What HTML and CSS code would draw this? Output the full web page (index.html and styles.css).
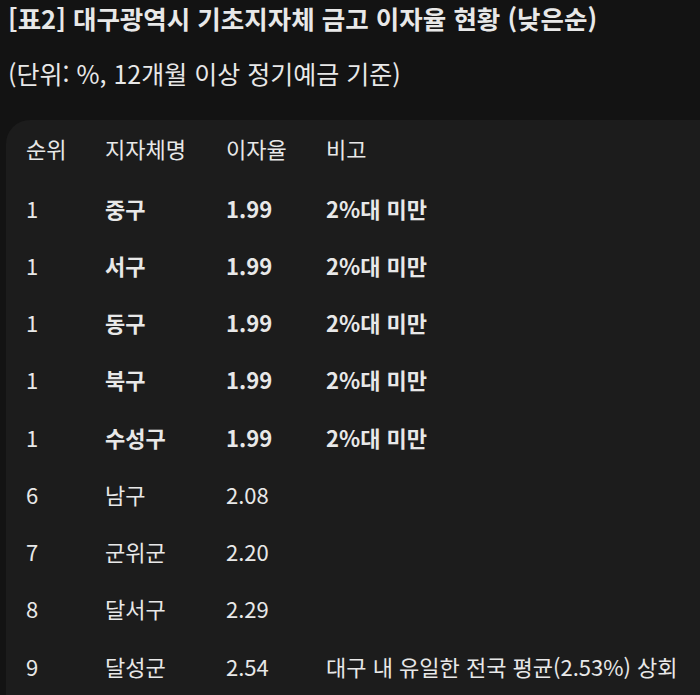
FILE: index.html
```html
<!DOCTYPE html>
<html lang="ko">
<head>
<meta charset="utf-8">
<link rel="stylesheet" href="styles.css">
</head>
<body>
<h1 class="title">[표2] 대구광역시 기초지자체 금고 이자율 현황 (낮은순)</h1>
<p class="unit">(단위: %, 12개월 이상 정기예금 기준)</p>
<div class="card">
  <div class="row head"><span>순위</span><span>지자체명</span><span>이자율</span><span>비고</span></div>
  <div class="row bold"><span>1</span><span>중구</span><span>1.99</span><span>2%대 미만</span></div>
  <div class="row bold"><span>1</span><span>서구</span><span>1.99</span><span>2%대 미만</span></div>
  <div class="row bold"><span>1</span><span>동구</span><span>1.99</span><span>2%대 미만</span></div>
  <div class="row bold"><span>1</span><span>북구</span><span>1.99</span><span>2%대 미만</span></div>
  <div class="row bold"><span>1</span><span>수성구</span><span>1.99</span><span>2%대 미만</span></div>
  <div class="row"><span>6</span><span>남구</span><span>2.08</span><span></span></div>
  <div class="row"><span>7</span><span>군위군</span><span>2.20</span><span></span></div>
  <div class="row"><span>8</span><span>달서구</span><span>2.29</span><span></span></div>
  <div class="row"><span>9</span><span>달성군</span><span>2.54</span><span>대구 내 유일한 전국 평균(2.53%) 상회</span></div>
</div>
</body>
</html>
```
FILE: styles.css
```css
html, body {
  margin: 0;
  background: #131313;
  overflow: hidden;
}
body {
  padding: 0 0 0 8px;
  color: #e8e8e8;
  font-family: "Noto Sans CJK KR", "Noto Sans", sans-serif;
}
.title {
  margin: 0;
  padding-top: 1px;
  font-size: 25.5px;
  font-weight: 700;
  line-height: 34px;
  white-space: nowrap;
}
.unit {
  margin: 0;
  padding-top: 21px;
  font-size: 25px;
  line-height: 34px;
  white-space: nowrap;
}
.card {
  margin: 30px 0 0 -2px;
  width: 696px;
  height: 600px;
  background: #1c1c1c;
  border-radius: 24px;
  padding: 0 0 0 20px;
}
.row {
  display: grid;
  grid-template-columns: 79px 121px 100px 1fr;
  height: 57.25px;
  align-items: center;
  font-size: 22px;
  white-space: nowrap;
}
.row.head {
  height: 59px;
  padding-bottom: 3px;
  box-sizing: border-box;
}
.bold {
  font-weight: 700;
}
.bold span:first-child {
  font-weight: 400;
}
```
